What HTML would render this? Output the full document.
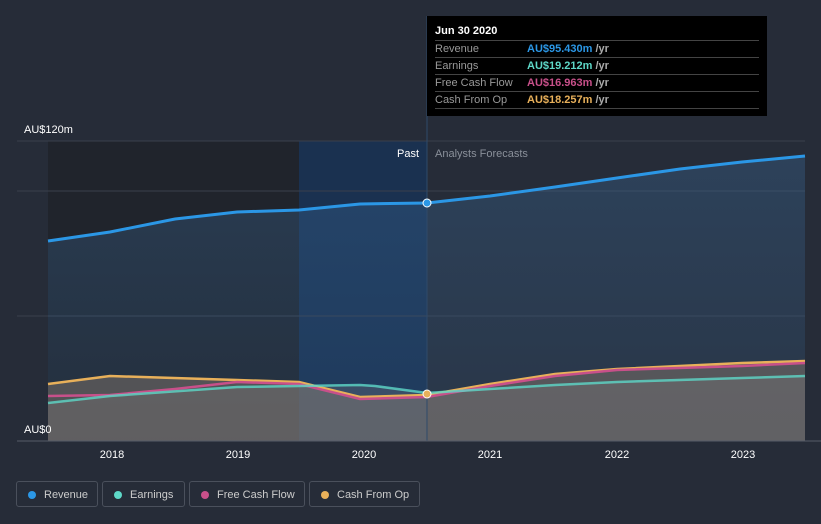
<!DOCTYPE html>
<html><head><meta charset="utf-8"><style>
body{margin:0;width:821px;height:524px;background:#262c38;font-family:"Liberation Sans",sans-serif;overflow:hidden;position:relative}
.tip{position:absolute;left:427px;top:16px;width:340px;height:100px;background:#000;color:#fff;font-size:11px}
.tip .h{position:absolute;left:8px;top:9px;font-weight:bold}
.row{position:absolute;left:8px;width:324px;border-top:1px solid #444;height:16px;line-height:16px}
.row span{color:#999}.row b{position:absolute;left:92px;font-weight:bold}.row i{font-style:normal;color:#aaa}
.leg{position:absolute;top:481px;height:26px;border:1px solid #4a505c;border-radius:3px;color:#ccc;font-size:11px;line-height:26px;box-sizing:border-box;padding-left:27px}
.leg:before{content:"";position:absolute;left:11px;top:9px;width:8px;height:8px;border-radius:50%;background:var(--c)}
</style></head><body>
<svg width="821" height="524" style="position:absolute;left:0;top:0">
<defs><linearGradient id="g" x1="0" y1="0" x2="0" y2="1"><stop offset="0" stop-color="#3a6a9a" stop-opacity=".35"/><stop offset="1" stop-color="#3a6a9a" stop-opacity=".15"/></linearGradient></defs>
<rect x="48" y="141" width="379" height="300" fill="#20242c"/>
<rect x="299" y="141" width="128" height="300" fill="#1a3150"/>
<line x1="17" y1="141" x2="805" y2="141" stroke="#3a404c"/>
<line x1="17" y1="191" x2="805" y2="191" stroke="#3a404c"/>
<line x1="17" y1="316" x2="805" y2="316" stroke="#3a404c"/>
<path d="M48,241 L110,232 175,219 237,212 299,210 360,204 427,203 490,196 555,187 617,178 680,169 742,162 805,156 L805,441 48,441Z" fill="url(#g)"/>
<path d="M48,384 L110,376 237,380 299,382 360,397 427,395 490,384 555,374 617,369 742,363 805,361 L805,441 48,441Z" fill="#7a7068" fill-opacity=".55"/>
<path d="M48,403 L110,396 237,387 299,386 360,385 375,386 427,393 490,389 555,385 617,382 742,378 805,376 L805,441 48,441Z" fill="#888" fill-opacity=".25"/>
<polyline fill="none" stroke="#e8b05a" stroke-width="2.5" points="48,384 110,376 237,380 299,382 360,397 427,395 490,384 555,374 617,369 742,363 805,361"/>
<polyline fill="none" stroke="#c8508a" stroke-width="2.5" points="48,396 110,395 175,389 237,382 299,384 360,399 427,397 490,386 555,376 617,370 742,366 805,363"/>
<polyline fill="none" stroke="#5ed8c8" stroke-width="2.5" opacity=".8" points="48,403 110,396 237,387 299,386 360,385 375,386 427,393 490,389 555,385 617,382 742,378 805,376"/>
<polyline fill="none" stroke="#2b97e6" stroke-width="3" points="48,241 110,232 175,219 237,212 299,210 360,204 427,203 490,196 555,187 617,178 680,169 742,162 805,156"/>
<line x1="427" y1="16" x2="427" y2="441" stroke="#2f4a6a"/>
<circle cx="427" cy="203" r="4" fill="#2b97e6" stroke="#fff" stroke-width="1"/>
<circle cx="427" cy="394" r="4" fill="#e8b05a" stroke="#fff" stroke-width="1"/>
<line x1="17" y1="441" x2="821" y2="441" stroke="#555c68"/>
<g fill="#fff" font-size="11" text-anchor="middle"><text x="112" y="458">2018</text><text x="238" y="458">2019</text><text x="364" y="458">2020</text><text x="490" y="458">2021</text><text x="617" y="458">2022</text><text x="743" y="458">2023</text></g>
<text x="24" y="133" fill="#fff" font-size="11">AU$120m</text>
<text x="24" y="433" fill="#fff" font-size="11">AU$0</text>
<text x="419" y="157" fill="#fff" font-size="11" text-anchor="end">Past</text>
<text x="435" y="157" fill="#8a909a" font-size="11">Analysts Forecasts</text>
</svg>
<div class="tip"><div class="h">Jun 30 2020</div>
<div class="row" style="top:24px"><span>Revenue</span><b style="color:#2b97e6">AU$95.430m <i>/yr</i></b></div>
<div class="row" style="top:41px"><span>Earnings</span><b style="color:#5ed8c8">AU$19.212m <i>/yr</i></b></div>
<div class="row" style="top:58px"><span>Free Cash Flow</span><b style="color:#c8508a">AU$16.963m <i>/yr</i></b></div>
<div class="row" style="top:75px;border-bottom:1px solid #444"><span>Cash From Op</span><b style="color:#e8b05a">AU$18.257m <i>/yr</i></b></div>
</div>
<div class="leg" style="left:16px;width:82px;--c:#2b97e6">Revenue</div>
<div class="leg" style="left:102px;width:83px;--c:#5ed8c8">Earnings</div>
<div class="leg" style="left:189px;width:116px;--c:#c8508a">Free Cash Flow</div>
<div class="leg" style="left:309px;width:111px;--c:#e8b05a">Cash From Op</div>
</body></html>
